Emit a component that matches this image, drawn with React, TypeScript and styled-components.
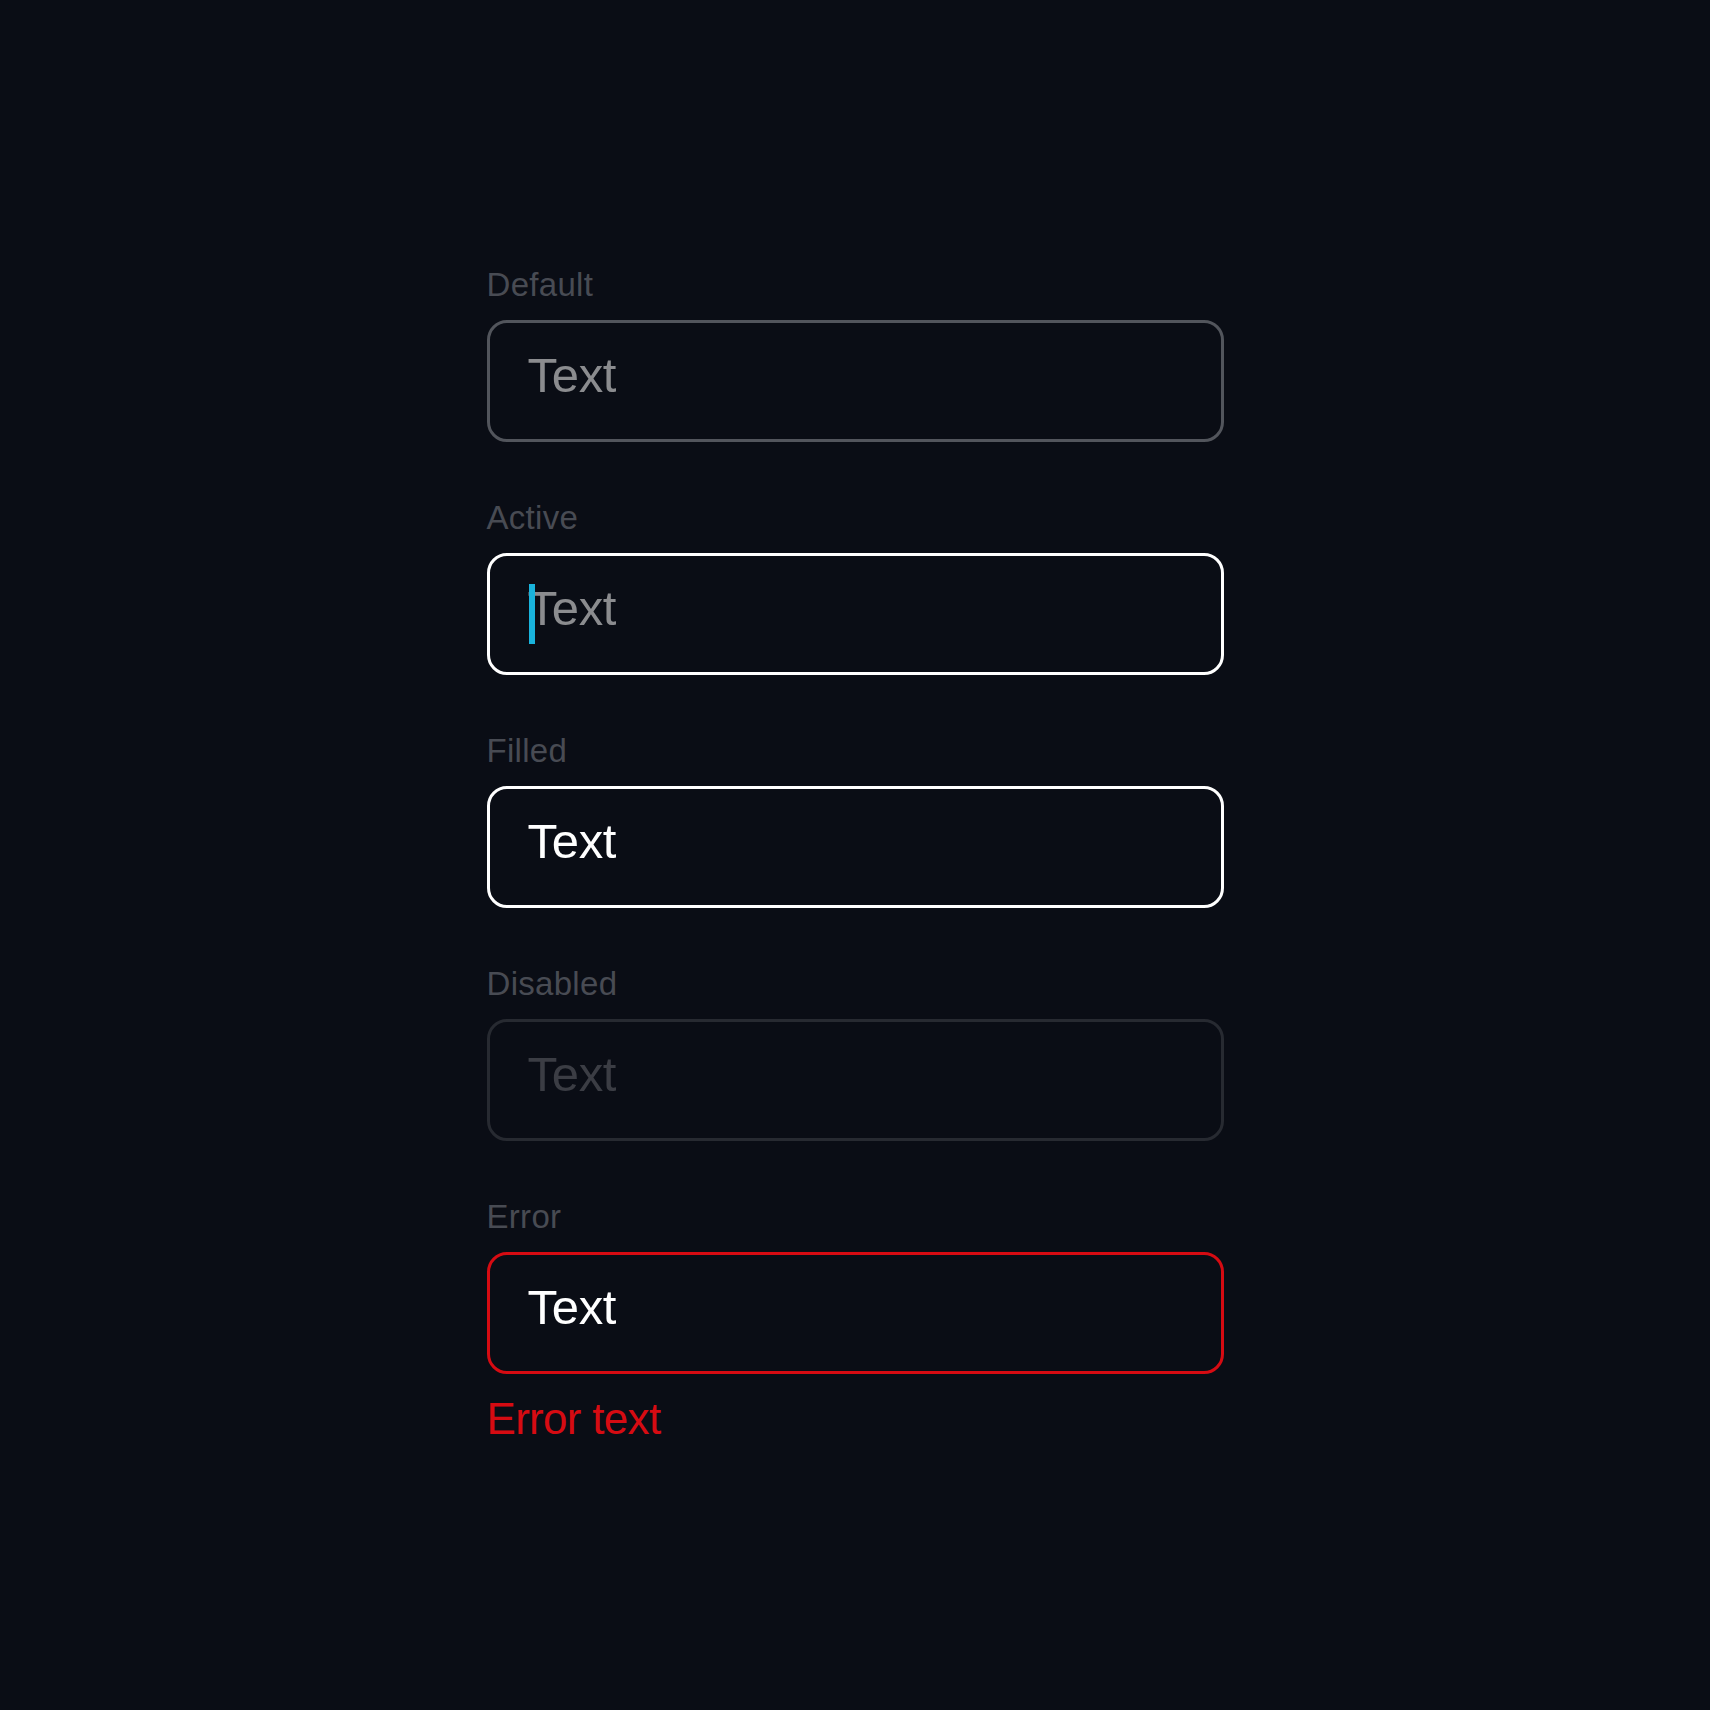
import React from "react";
import styled, { createGlobalStyle } from "styled-components";

const GlobalStyle = createGlobalStyle`
  html, body {
    margin: 0;
    padding: 0;
    background: #0a0d15;
  }
  body {
    font-family: "Liberation Sans", Arial, sans-serif;
  }
`;

type Variant = "default" | "active" | "filled" | "disabled" | "error";

const Page = styled.div`
  min-height: 1710px;
  background: #0a0d15;
  display: flex;
  justify-content: center;
  padding-top: 268px;
  box-sizing: border-box;
`;

const Column = styled.div`
  width: 737px;
  display: flex;
  flex-direction: column;
  gap: 59px;
`;

const Field = styled.div`
  display: flex;
  flex-direction: column;
`;

const Label = styled.div`
  font-size: 33px;
  line-height: 33px;
  color: #484b53;
  letter-spacing: 0.3px;
  margin-bottom: 19px;
`;

const borderColors: Record<Variant, string> = {
  default: "#52555c",
  active: "#ffffff",
  filled: "#ffffff",
  disabled: "#272a31",
  error: "#d60b12",
};

const textColors: Record<Variant, string> = {
  default: "#8b8c8f",
  active: "#8b8c8f",
  filled: "#ffffff",
  disabled: "#3b3d44",
  error: "#ffffff",
};

const Box = styled.div<{ $variant: Variant }>`
  box-sizing: border-box;
  height: 122px;
  border: 3px solid ${(p) => borderColors[p.$variant]};
  border-radius: 20px;
  display: flex;
  align-items: flex-start;
  padding: 28px 0 0 38px;
`;

const Value = styled.span<{ $variant: Variant }>`
  position: relative;
  font-size: 49px;
  line-height: 48px;
  letter-spacing: -0.3px;
  color: ${(p) => textColors[p.$variant]};
`;

const Caret = styled.span`
  position: absolute;
  left: 1px;
  top: 0;
  width: 6px;
  height: 60px;
  background: #19b3dc;
`;

const ErrorText = styled.div`
  font-size: 44px;
  line-height: 44px;
  letter-spacing: -0.7px;
  color: #d60b12;
  margin-top: 23px;
`;

const fields: { label: string; variant: Variant }[] = [
  { label: "Default", variant: "default" },
  { label: "Active", variant: "active" },
  { label: "Filled", variant: "filled" },
  { label: "Disabled", variant: "disabled" },
  { label: "Error", variant: "error" },
];

export default function App() {
  return (
    <>
      <GlobalStyle />
      <Page>
        <Column>
          {fields.map((f) => (
            <Field key={f.label}>
              <Label>{f.label}</Label>
              <Box $variant={f.variant}>
                <Value $variant={f.variant}>
                  Text
                  {f.variant === "active" && <Caret />}
                </Value>
              </Box>
              {f.variant === "error" && <ErrorText>Error text</ErrorText>}
            </Field>
          ))}
        </Column>
      </Page>
    </>
  );
}
